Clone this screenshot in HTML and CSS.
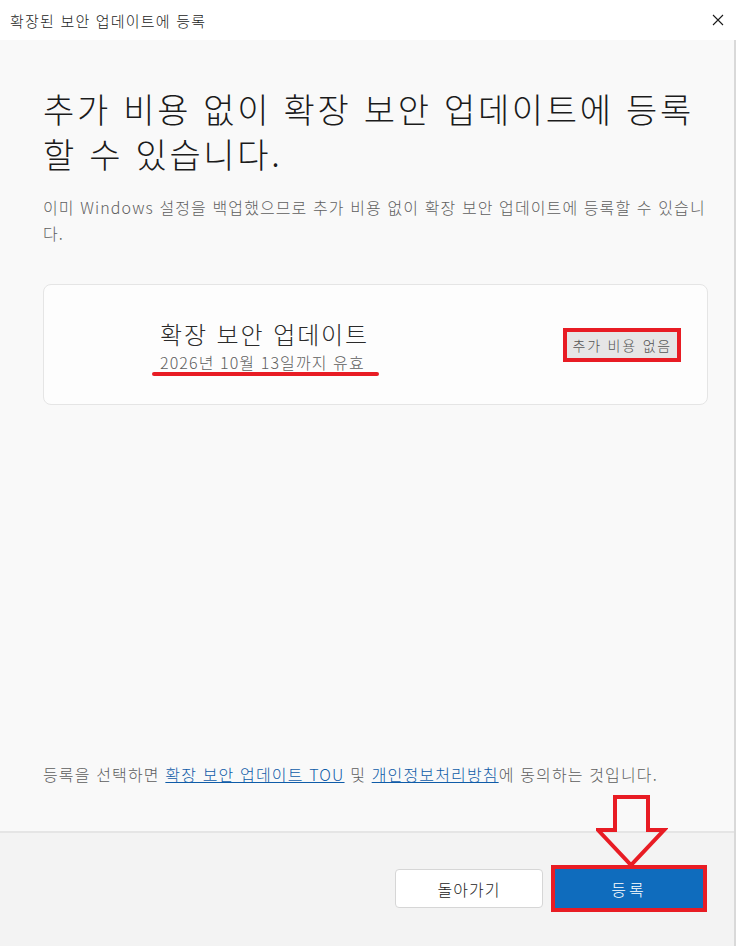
FILE: index.html
```html
<!DOCTYPE html>
<html lang="ko">

<head>
    <meta charset="UTF-8">
    <meta name="viewport" content="width=device-width, initial-scale=1.0">
    <link rel="stylesheet" href="styles.css">
    <title>확장된 보안 업데이트에 등록</title>
</head>

<body>
    <div id="titleBar">
        <div class="titleText">확장된 보안 업데이트에 등록</div>
        <div class="closeButton">
            <svg width="12" height="12" viewBox="0 0 12 12">
                <path d="M1 1 L11 11 M11 1 L1 11" stroke="#1a1a1a" stroke-width="1.1" fill="none" />
            </svg>
        </div>
    </div>

    <div id="window">
        <div id="content">
            <h1 class="heading">
                <span class="headLine">추가 비용 없이 확장 보안 업데이트에 등록</span>
                <span class="headLine">할 수 있습니다.</span>
            </h1>
            <p class="description">이미 Windows 설정을 백업했으므로 추가 비용 없이 확장 보안 업데이트에 등록할 수 있습니<br>다.</p>

            <div class="card">
                <div class="cardText">
                    <div class="cardTitle">확장 보안 업데이트</div>
                    <div class="cardSub">2026년 10월 13일까지 유효</div>
                </div>
                <div class="badgeMark">
                    <div class="badge">추가 비용 없음</div>
                </div>
            </div>

            <div class="notice">등록을 선택하면 <a href="#">확장 보안 업데이트 TOU</a> 및 <a href="#">개인정보처리방침</a>에 동의하는 것입니다.</div>
        </div>

        <div id="footer">
            <div class="button secondary">돌아가기</div>
            <div class="buttonMark">
                <div class="button primary">등록</div>
            </div>
            <!-- 안내용 화살표 -->
            <svg class="arrow" width="72" height="74" viewBox="0 0 72 74">
                <path d="M19 2 H52 V35 H68 L35 70 L2 35 H19 Z" stroke="#e81c24" stroke-width="4" fill="none"
                    stroke-linejoin="miter" />
            </svg>
        </div>
    </div>
</body>

</html>
```

FILE: styles.css
```css
body {
    margin: 0;
    width: 736px;
    height: 946px;
    overflow: hidden;
    font-family: "Noto Sans CJK KR", "Noto Sans", sans-serif;
    color: #1b1b1b;
    background-color: #ffffff;
}

#titleBar {
    height: 40px;
    display: flex;
    align-items: center;
    justify-content: space-between;
    padding: 0 6px 0 10px;
    background-color: #ffffff;
}

.titleText {
    font-size: 15px;
    font-weight: 300;
    letter-spacing: 1.2px;
}

.closeButton {
    width: 24px;
    height: 24px;
    display: flex;
    align-items: center;
    justify-content: center;
}

#window {
    height: 906px;
    display: flex;
    flex-direction: column;
    border-right: 2px solid #d9d9d9;
    box-sizing: border-box;
}

#content {
    flex: 1;
    display: flex;
    flex-direction: column;
    padding: 46px 20px 46px 43px;
    background-color: #f9f9f9;
    border-bottom: 2px solid #e5e5e5;
}

.heading {
    margin: 0;
    display: flex;
    flex-direction: column;
    font-size: 34px;
    font-weight: 300;
    letter-spacing: 2.7px;
    color: #1b1b1b;
    white-space: nowrap;
}

.headLine {
    height: 45px;
    line-height: 45px;
}

.description {
    margin: 18px 0 0 0;
    font-size: 16px;
    font-weight: 300;
    line-height: 26px;
    color: #5f5f5f;
    letter-spacing: 1.1px;
    white-space: nowrap;
}

.card {
    margin-top: 38px;
    margin-right: 6px;
    height: 121px;
    box-sizing: border-box;
    display: flex;
    align-items: center;
    justify-content: space-between;
    padding: 0 26px 0 116px;
    background-color: #fdfdfd;
    border: 1px solid #e5e5e5;
    border-radius: 8px;
}

.cardText {
    display: flex;
    flex-direction: column;
    margin-top: 4px;
}

.cardTitle {
    font-size: 24px;
    font-weight: 300;
    line-height: 30px;
    color: #2a2a2a;
    letter-spacing: 1.9px;
}

.cardSub {
    position: relative;
    font-size: 16px;
    font-weight: 300;
    line-height: 26px;
    color: #5d5d5d;
    letter-spacing: 1.1px;
}

.cardSub::after {
    content: "";
    position: absolute;
    left: -8px;
    top: 23px;
    width: 227px;
    height: 4px;
    border-radius: 2px;
    background-color: #e81c24;
}

.badgeMark {
    border: 4px solid #e81c24;
}

.badge {
    padding: 0 5px;
    height: 26px;
    line-height: 26px;
    font-size: 14px;
    font-weight: 300;
    color: #555555;
    background-color: #e6e6e6;
    letter-spacing: 1.8px;
}

.notice {
    margin-top: auto;
    font-size: 16px;
    font-weight: 300;
    line-height: 22px;
    color: #5d5d5d;
    letter-spacing: 1.15px;
    white-space: nowrap;
}

.notice a {
    color: #0f5ca8;
    text-decoration: underline;
}

#footer {
    position: relative;
    height: 111px;
    display: flex;
    align-items: center;
    justify-content: flex-end;
    gap: 8px;
    padding: 0 27px 2px 0;
    background-color: #f3f3f3;
}

.button {
    width: 148px;
    height: 39px;
    box-sizing: border-box;
    display: flex;
    align-items: center;
    justify-content: center;
    font-size: 16px;
    font-weight: 300;
    letter-spacing: 1px;
    border-radius: 4px;
}

.secondary {
    background-color: #ffffff;
    border: 1px solid #d6d6d6;
    color: #1b1b1b;
}

.buttonMark {
    border: 4px solid #e81c24;
}

.primary {
    border-radius: 0;
    background-color: #0f6cbd;
    color: #ffffff;
    letter-spacing: 3px;
}

.arrow {
    position: absolute;
    left: 596px;
    top: -38px;
}
```
